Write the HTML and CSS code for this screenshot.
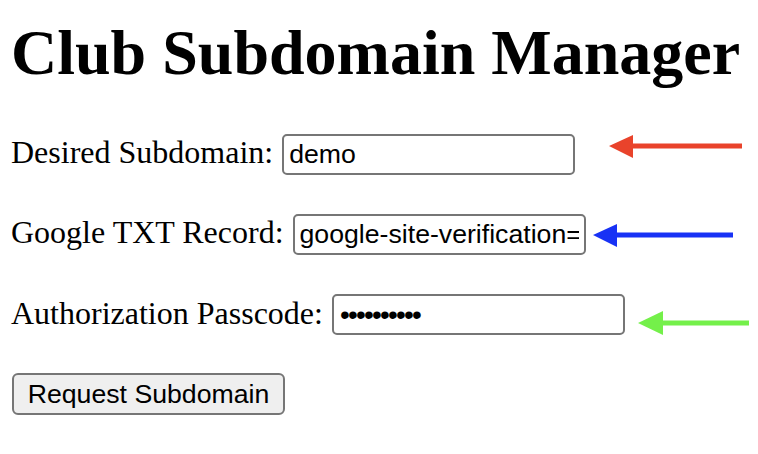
FILE: index.html
```html
<!DOCTYPE html>
<html>
<head>
<meta charset="utf-8">
<title>Club Subdomain Manager</title>
<link rel="stylesheet" href="styles.css">
</head>
<body>
<div class="page">
  <h1 class="title">Club Subdomain Manager</h1>
  <form class="form">
    <div class="row">
      <label class="label" for="sub">Desired Subdomain:</label>
      <input class="field" id="sub" type="text" value="demo">
    </div>
    <div class="row">
      <label class="label" for="txt">Google TXT Record:</label>
      <input class="field" id="txt" type="text" value="google-site-verification=">
    </div>
    <div class="row">
      <label class="label" for="pass">Authorization Passcode:</label>
      <input class="field pass" id="pass" type="password" value="abcdefghij">
    </div>
    <div class="row">
      <button class="btn" type="button">Request Subdomain</button>
    </div>
  </form>
  <svg class="notes" width="758" height="454" viewBox="0 0 758 454" aria-hidden="true">
    <line x1="630" y1="146" x2="742" y2="146" stroke="#e9432b" stroke-width="5"/>
    <polygon points="609,146 633,135 633,158" fill="#e9432b"/>
    <line x1="614" y1="235" x2="733" y2="235" stroke="#1832f5" stroke-width="5"/>
    <polygon points="593,235 617,224 617,247" fill="#1832f5"/>
    <line x1="660" y1="323" x2="749" y2="323" stroke="#74f04a" stroke-width="5"/>
    <polygon points="638,323 663,311 663,335" fill="#74f04a"/>
  </svg>
</div>
</body>
</html>
```
FILE: styles.css
```css
html, body {
  margin: 0;
  padding: 0;
  background: #ffffff;
}
.page {
  position: relative;
  width: 758px;
  height: 454px;
  padding: 16px 0 0 11px;
  box-sizing: border-box;
  overflow: hidden;
  font-family: "Liberation Serif", "Times New Roman", serif;
  color: #000;
}
.title {
  margin: 0;
  font-size: 64px;
  line-height: 74px;
  font-weight: bold;
}
.form {
  margin: 44px 0 0 0;
  display: flex;
  flex-direction: column;
  gap: 39px;
}
.row {
  display: flex;
  align-items: baseline;
  gap: 9px;
  height: 41px;
}
.label {
  font-size: 32px;
  line-height: 32px;
}
.field {
  box-sizing: border-box;
  width: 293px;
  height: 41px;
  margin: 0;
  padding: 0 5px;
  border: 2px solid #767676;
  border-radius: 5px;
  font-family: "Liberation Sans", Arial, sans-serif;
  font-size: 26.67px;
  color: #000;
  background: #fff;
  outline: none;
}
.pass {
  font-size: 28px;
  letter-spacing: -1.8px;
  padding-left: 6px;
}
.btn {
  box-sizing: border-box;
  width: 273px;
  height: 42px;
  margin: -1px 0 0 1px;
  padding: 0;
  border: 2px solid #767676;
  border-radius: 6px;
  background: #efefef;
  font-family: "Liberation Sans", Arial, sans-serif;
  font-size: 26.67px;
  color: #000;
}
.notes {
  position: absolute;
  left: 0;
  top: 0;
  pointer-events: none;
}
```
